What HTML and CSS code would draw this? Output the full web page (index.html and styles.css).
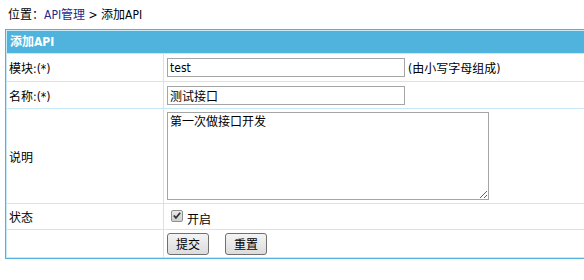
FILE: index.html
```html
<!DOCTYPE html>
<html lang="zh-CN">
<head>
    <meta charset="UTF-8">
    <title>添加API</title>
    <link rel="stylesheet" href="styles.css">
</head>
<body>
    <div class="crumb">位置：<a href="#" class="crumb-link">API管理</a> &gt; 添加API</div>

    <div class="panel">
        <div class="panel-body">
            <div class="panel-title">添加API</div>
            <form class="api-form">
                <!-- 模块 -->
                <div class="row row-module">
                    <div class="label">模块:(*)</div>
                    <div class="field">
                        <input type="text" class="text-input" name="module" value="test">
                        <span class="hint">(由小写字母组成)</span>
                    </div>
                </div>

                <!-- 名称 -->
                <div class="row row-name">
                    <div class="label">名称:(*)</div>
                    <div class="field">
                        <input type="text" class="text-input" name="name" value="测试接口">
                    </div>
                </div>

                <!-- 说明 -->
                <div class="row row-desc">
                    <div class="label">说明</div>
                    <div class="field">
                        <textarea class="text-area" name="desc">第一次做接口开发</textarea>
                    </div>
                </div>

                <!-- 状态 -->
                <div class="row row-status">
                    <div class="label">状态</div>
                    <div class="field">
                        <label class="toggle">
                            <span class="check">
                                <svg width="11" height="11" viewBox="0 0 11 11"><path d="M2 5.5 L4.3 8.2 L9 2.5" fill="none" stroke="#333" stroke-width="2"/></svg>
                            </span>
                            开启
                        </label>
                    </div>
                </div>

                <div class="row row-buttons">
                    <div class="label"></div>
                    <div class="field buttons">
                        <button type="button" class="btn">提交</button>
                        <button type="reset" class="btn">重置</button>
                    </div>
                </div>
            </form>
        </div>
    </div>
</body>
</html>
```

FILE: styles.css
```css
body {
    margin: 0;
    font-family: "DejaVu Sans Condensed", "DejaVu Sans", "Noto Sans CJK SC", sans-serif;
    font-size: 12px;
    color: #000;
    background: #fff;
}
.crumb {
    padding: 5px 0 0 8px;
    height: 20px;
    line-height: 20px;
    margin-bottom: 4px;
}
.crumb-link {
    color: #1f2a8c;
    text-decoration: none;
}
/* the panel runs on past the right edge of the window */
.panel {
    margin-left: 5px;
    border: 1px solid #4fb3dd;
    border-right: none;
}
.panel-body {
    border: 1px solid #c7e8f7;
    border-right: none;
}
.panel-title {
    height: 22px;
    line-height: 22px;
    padding-left: 3px;
    background: #4fb3dd;
    color: #fff;
    font-weight: bold;
    border-bottom: 1px solid #c7e8f7;
}
.row {
    display: flex;
    border-bottom: 1px solid #c7e8f7;
}
.row:last-child {
    border-bottom: none;
}
.row-module { height: 27px; }
.row-name { height: 26px; }
.row-desc { height: 94px; }
.row-status { height: 25px; }
.row-buttons { height: 27px; }
.label {
    width: 154px;
    padding-left: 2px;
    border-right: 1px solid #c7e8f7;
    display: flex;
    align-items: center;
}
.field {
    flex: 1;
    padding-left: 3px;
    display: flex;
    align-items: center;
}
.text-input {
    box-sizing: border-box;
    width: 238px;
    height: 19px;
    margin: 0;
    padding: 0 2px;
    border: 1px solid #a5a5a5;
    font: inherit;
    color: #000;
    outline: none;
}
.hint {
    margin-left: 3px;
}
.text-area {
    box-sizing: border-box;
    width: 322px;
    height: 88px;
    margin: 0;
    padding: 1px 2px;
    border: 1px solid #a5a5a5;
    font: inherit;
    line-height: 16px;
    color: #000;
    outline: none;
}
.toggle {
    display: flex;
    align-items: flex-start;
    line-height: 16px;
    margin-top: 6px;
}
.check {
    box-sizing: border-box;
    width: 12px;
    height: 12px;
    margin: -2px 4px 0 4px;
    border: 1px solid #8e8f8f;
    border-radius: 2px;
    background: linear-gradient(#e8e8e8, #cfcfcf);
    display: flex;
    align-items: center;
    justify-content: center;
}
.buttons {
    gap: 16px;
}
.btn {
    box-sizing: border-box;
    height: 22px;
    margin: 0;
    padding: 0 8px;
    border: 1px solid #707070;
    border-radius: 3px;
    background: linear-gradient(#f4f4f4, #dcdcdc);
    font: inherit;
    font-size: 12px;
    color: #000;
}
```
